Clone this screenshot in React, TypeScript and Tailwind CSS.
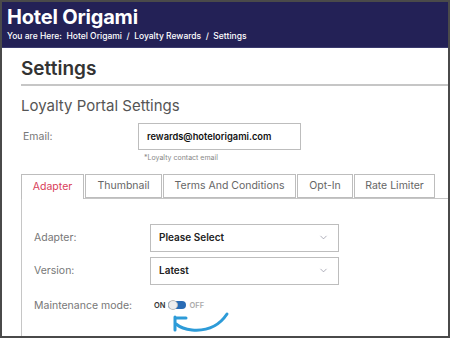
import { ChevronDown } from "lucide-react";

const tabs = [
  { label: "Adapter", w: "w-[63px]" },
  { label: "Thumbnail", w: "w-[77px]" },
  { label: "Terms And Conditions", w: "w-[133px]" },
  { label: "Opt-In", w: "w-[56px]" },
  { label: "Rate Limiter", w: "w-[81px]" },
];

function SelectBox({ value }: { value: string }) {
  return (
    <div className="flex h-[28px] w-[189px] items-center justify-between border border-[#bdbdbd] pl-[8px] pr-[9px] text-[10px] font-semibold text-[#222]">
      <span>{value}</span>
      <ChevronDown size={11} strokeWidth={1.5} className="text-[#8a8a9a]" />
    </div>
  );
}

export default function App() {
  return (
    <div className="h-[338px] w-[450px] overflow-hidden border-2 border-[#4a4a4a] bg-white font-['Inter',sans-serif]">
      {/* Header */}
      <div className="h-[46px] border-b border-[#3a3a6e] bg-[#232156] px-[5px] pt-[3px] text-white">
        <div className="text-[20px] font-bold leading-[24px] tracking-[-0.2px]">Hotel Origami</div>
        <div className="mt-[2px] text-[8.5px] font-medium leading-[11px]">
          You are Here:&nbsp;&nbsp;Hotel Origami&nbsp;&nbsp;/&nbsp;&nbsp;Loyalty Rewards&nbsp;&nbsp;/&nbsp;&nbsp;Settings
        </div>
      </div>

      <div className="w-[700px] pl-[19px]">
        <h1 className="pt-[9px] text-[19px] font-semibold leading-[24px] text-[#333]">Settings</h1>
        <div className="mt-[3px] h-[2px] bg-[#c6c6c6]" />
        <h2 className="mt-[11px] text-[15px] leading-[18px] text-[#555]">Loyalty Portal Settings</h2>

        <div className="mt-[8px] flex items-center">
          <span className="w-[117px] pl-[2px] text-[10.5px] text-[#777]">Email:</span>
          <div className="flex h-[27px] w-[163px] items-center border border-[#bdbdbd] pl-[8px] text-[9.3px] font-semibold text-[#111]">
            rewards@hotelorigami.com
          </div>
        </div>
        <div className="mt-[3px] pl-[123px] text-[7px] text-[#888]">*Loyalty contact email</div>

        {/* Tabs */}
        <div className="mt-[10px] flex border-b border-[#c6c6c6]">
          {tabs.map((t, i) => (
            <div
              key={t.label}
              className={
                i === 0
                  ? `-mb-px mr-[1px] flex h-[25px] items-center justify-center border border-b-0 border-[#bdbdbd] bg-white text-[10.5px] text-[#d9405a] ${t.w}`
                  : `mr-[1px] flex h-[24px] items-center justify-center border border-[#bdbdbd] text-[10.5px] text-[#666] ${t.w}`
              }
            >
              {t.label}
            </div>
          ))}
        </div>

        {/* Panel */}
        <div className="h-[200px] border-l border-[#c6c6c6] pl-[12px] pt-[25px]">
          <div className="flex items-center">
            <span className="w-[116px] text-[10.5px] text-[#777]">Adapter:</span>
            <SelectBox value="Please Select" />
          </div>
          <div className="mt-[5px] flex items-center">
            <span className="w-[116px] text-[10.5px] text-[#777]">Version:</span>
            <SelectBox value="Latest" />
          </div>
          <div className="mt-[13px] flex items-center">
            <span className="w-[120px] text-[10.5px] text-[#777]">Maintenance mode:</span>
            <span className="text-[7.5px] font-semibold text-[#333]">ON</span>
            <span className="relative mx-[3px] inline-block h-[8px] w-[18px] rounded-full bg-[#2a6cb5]">
              <span className="absolute left-0 top-[-1px] h-[10px] w-[10px] rounded-full border border-[#bbb] bg-[#eee]" />
            </span>
            <span className="text-[7.5px] font-semibold text-[#aaa]">OFF</span>
          </div>
          <svg width="70" height="30" viewBox="0 0 70 30" className="ml-[126px] mt-[-3px]" fill="none">
            <path d="M67 4 Q55 22 32 20 Q22 19 16 14" stroke="#2d9bd8" strokeWidth="3" strokeLinecap="round" />
            <path d="M15 7 L15 20 M15 8 L26 8" stroke="#2d9bd8" strokeWidth="3" strokeLinecap="round" />
          </svg>
        </div>
      </div>
    </div>
  );
}
